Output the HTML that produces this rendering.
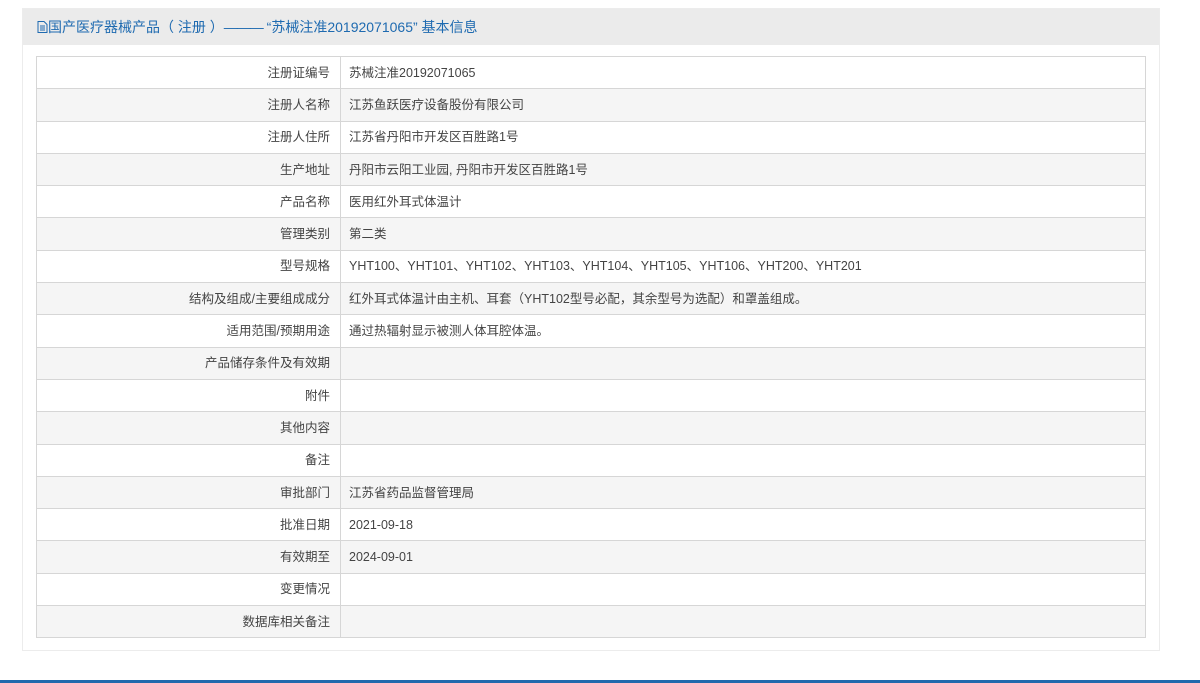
<!DOCTYPE html>
<html><head><meta charset="utf-8"><style>
body{margin:0;width:1200px;height:683px;background:#fff;font-family:"Liberation Sans","Noto Sans CJK SC",sans-serif;position:relative;overflow:hidden}
.box{position:absolute;left:22px;top:8px;width:1138px;height:643px;border:1px solid #ececec;box-sizing:border-box}
.hd{height:36px;background:#ebebeb;color:#1e6ab0;font-size:14px;line-height:37px;padding-left:14px;white-space:pre}
table{position:absolute;left:13px;top:47px;width:1110px;border-collapse:collapse;font-size:12.5px;color:#444;table-layout:fixed}
td{height:31.3px;border:1px solid #d6d6d6;padding:0 8px;white-space:nowrap;vertical-align:middle;line-height:14px}
td.l{width:285px;text-align:right;padding-right:10px}
tr:nth-child(even) td{background:#f5f5f5}
.line{position:absolute;left:0;top:680px;width:1200px;height:3px;background:#2169ad}
</style></head><body>
<div class="box"><div class="hd"><svg width="11" height="12" viewBox="0 0 11 12" style="vertical-align:-1px"><path d="M1 .5h6l3 3v8H1z M3 5h5M3 7h5M3 9h5" fill="none" stroke="#1e6ab0"/></svg>国产医疗器械产品（ 注册 ）<span style="letter-spacing:-1px">———</span> “苏械注准20192071065” 基本信息</div>
<table>
<tr><td class="l">注册证编号</td><td>苏械注准20192071065</td></tr>
<tr><td class="l">注册人名称</td><td>江苏鱼跃医疗设备股份有限公司</td></tr>
<tr><td class="l">注册人住所</td><td>江苏省丹阳市开发区百胜路1号</td></tr>
<tr><td class="l">生产地址</td><td>丹阳市云阳工业园, 丹阳市开发区百胜路1号</td></tr>
<tr><td class="l">产品名称</td><td>医用红外耳式体温计</td></tr>
<tr><td class="l">管理类别</td><td>第二类</td></tr>
<tr><td class="l">型号规格</td><td>YHT100、YHT101、YHT102、YHT103、YHT104、YHT105、YHT106、YHT200、YHT201</td></tr>
<tr><td class="l">结构及组成/主要组成成分</td><td>红外耳式体温计由主机、耳套（YHT102型号必配，其余型号为选配）和罩盖组成。</td></tr>
<tr><td class="l">适用范围/预期用途</td><td>通过热辐射显示被测人体耳腔体温。</td></tr>
<tr><td class="l">产品储存条件及有效期</td><td></td></tr>
<tr><td class="l">附件</td><td></td></tr>
<tr><td class="l">其他内容</td><td></td></tr>
<tr><td class="l">备注</td><td></td></tr>
<tr><td class="l">审批部门</td><td>江苏省药品监督管理局</td></tr>
<tr><td class="l">批准日期</td><td>2021-09-18</td></tr>
<tr><td class="l">有效期至</td><td>2024-09-01</td></tr>
<tr><td class="l">变更情况</td><td></td></tr>
<tr><td class="l">数据库相关备注</td><td></td></tr>
</table></div>
<div class="line"></div>
</body></html>
